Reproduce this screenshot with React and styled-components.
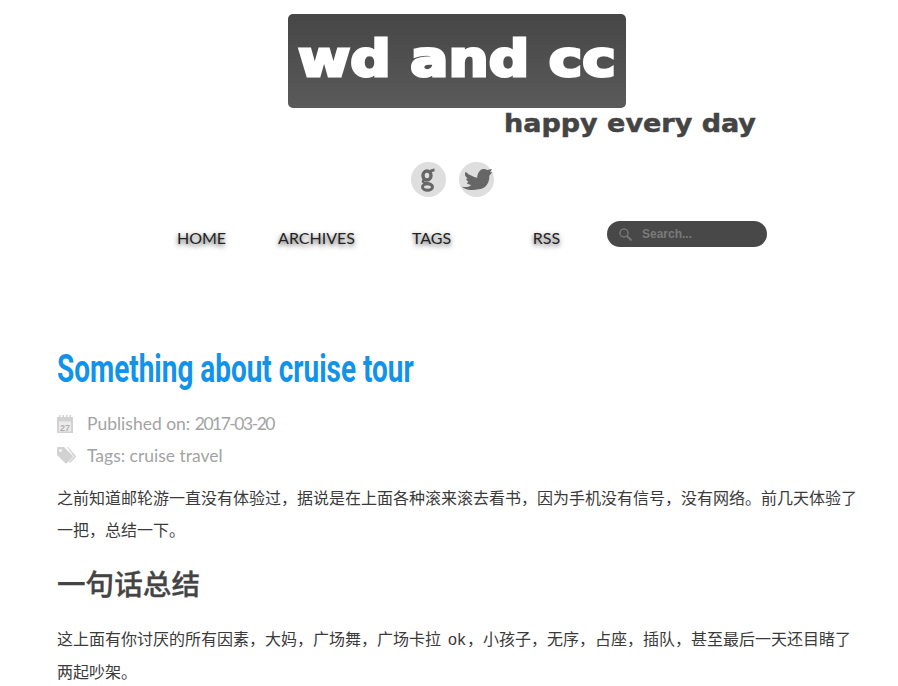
import React from 'react';
import styled, { createGlobalStyle } from 'styled-components';

const CJK = '"Noto Sans CJK SC", "Noto Sans CJK TC"';

const GlobalStyle = createGlobalStyle`
  html, body {
    margin: 0;
    padding: 0;
    background: #fff;
    overflow: hidden;
  }
  body {
    font-family: Lato, ${CJK}, sans-serif;
  }
`;

const Page = styled.div`
  width: 898px;
  height: 686px;
  overflow: hidden;
`;

const Header = styled.header`
  display: flex;
  flex-direction: column;
  padding-top: 14px;
`;

const LogoBox = styled.div`
  width: 338px;
  height: 94px;
  margin-left: 288px;
  display: flex;
  align-items: center;
  border-radius: 5px;
  background: linear-gradient(#464646, #5a5a5a);
  overflow: hidden;
`;

const LogoText = styled.span`
  display: block;
  margin: -4px 0 0 10px;
  font-family: "DejaVu Sans", sans-serif;
  font-weight: 700;
  font-size: 50px;
  line-height: 60px;
  color: #fff;
  white-space: nowrap;
  -webkit-text-stroke: 3px #fff;
  transform-origin: left center;
  transform: scaleX(1.13);
`;

const Tagline = styled.div`
  margin: 1px 0 0 504px;
  height: 29px;
  font-family: "DejaVu Sans", sans-serif;
  font-weight: 700;
  font-size: 25px;
  line-height: 29px;
  color: #444;
  white-space: nowrap;
  -webkit-text-stroke: 0.5px #444;
  transform-origin: left center;
  transform: scaleX(1.08);
`;

const Social = styled.div`
  display: flex;
  justify-content: center;
  gap: 13px;
  margin: 24px 0 0 6px;
`;

const SocialLink = styled.a`
  width: 35px;
  height: 35px;
  border-radius: 50%;
  background: #dedede;
  display: flex;
  align-items: center;
  justify-content: center;
`;

const NavRow = styled.nav`
  display: flex;
  align-items: flex-start;
  margin-top: 24px;
  padding-left: 144px;
`;

const NavItem = styled.a`
  width: 115px;
  padding-top: 7px;
  text-align: center;
  font-size: 16px;
  line-height: 19px;
  color: #222;
  text-shadow: 0 2px 5px rgba(0, 0, 0, 0.7);
`;

const SearchBox = styled.div`
  width: 160px;
  height: 26px;
  margin-left: 3px;
  box-sizing: border-box;
  padding-left: 11px;
  display: flex;
  align-items: center;
  gap: 9px;
  border-radius: 13px;
  background: #484848;
`;

const SearchText = styled.span`
  font-family: "Liberation Sans", sans-serif;
  font-weight: 700;
  font-size: 12px;
  color: #7b7b7b;
`;

const Article = styled.article`
  padding: 0 40px 0 57px;
`;

const Title = styled.h1`
  margin: 98px 0 0;
  height: 48px;
  font-family: Roboto, sans-serif;
  font-weight: 700;
  font-size: 38px;
  line-height: 48px;
  color: #1193ea;
  white-space: nowrap;
  transform-origin: left center;
  transform: scaleX(0.735);
`;

const MetaList = styled.div`
  display: flex;
  flex-direction: column;
  margin-top: 14px;
`;

const MetaRow = styled.div`
  display: flex;
  align-items: center;
  height: 32px;
  font-size: 17.5px;
  white-space: pre;
  color: #a3a3a3;
`;

const DateText = styled.span`
  letter-spacing: -1.5px;
`;

const MetaIcon = styled.svg`
  width: 30px;
  height: 19px;
  flex: none;
  fill: #d2d2d2;
`;

const Para = styled.p`
  margin: 11px 0 0;
  font-size: 16px;
  line-height: 32px;
  color: #3a3a3a;
`;

const Latin = styled.span`
  font-family: "Liberation Sans", sans-serif;
  letter-spacing: 0.5px;
  margin: 0 1px 0 3px;
`;

const SubHead = styled.h2`
  margin: 20px 0 21px;
  font-size: 28.6px;
  line-height: 36px;
  font-weight: 500;
  color: #444;
  -webkit-text-stroke: 0.3px #444;
`;

function GoodreadsIcon() {
  return (
    <svg width="20" height="26" viewBox="0 0 20 26" fill="none" stroke="#666">
      <ellipse cx="9" cy="8.5" rx="4" ry="4.5" strokeWidth="3.4" />
      <ellipse cx="9.5" cy="20" rx="5" ry="3.2" strokeWidth="3" />
      <path d="M6 12.5 C4 14.5 5 16 9 16.3 C11 16.5 13 17 14 19" strokeWidth="2.4" />
      <path d="M12 5 C13 3.5 14.5 3 16.5 3" strokeWidth="2.8" />
    </svg>
  );
}

function BirdIcon() {
  return (
    <svg width="35" height="35" viewBox="0 0 35 35" fill="#666">
      <path d="M6.700 9.700 C8.500 11.500 10.500 13 12.700 13.700 C14.500 14.800 16.500 15.500 18.300 15.700 C18 12.500 20.500 7 24.300 7 C25.800 7 27.300 7.500 28.300 8 L33 7 L31 10.300 L33.300 10.300 L30.300 13.700 C30.500 17.500 29.500 20.500 27.700 23 C25.500 26 22.500 27.300 19.300 27.300 C16 28.300 12.500 28.300 9.300 27.700 C7 27.200 4.500 26 2.700 24.700 C5 25.200 7.500 25.200 9.300 24.700 C10.500 24.300 11.500 23.700 12.300 23 C10.500 22.800 8.800 22.200 7.700 21.300 L9.300 19.700 C8.300 19 7.500 18 7 17 L8.700 16.300 C7.200 15.200 6 13.500 6 13 C5.800 11.800 6 10.700 6.700 9.700 Z" />
    </svg>
  );
}

function CalendarIcon() {
  return (
    <MetaIcon viewBox="0 0 30 19">
      <path d="M0 3h2V1h1.500v2h2V1H7v2h2V1h1.500v2h2V1H14v2h2v16H0z" />
      <rect x="2" y="7.500" width="12" height="10" fill="#ececec" />
      <text x="8" y="16.500" textAnchor="middle" fontFamily="Liberation Sans" fontWeight="700" fontSize="9" fill="#b0b0b0">27</text>
    </MetaIcon>
  );
}

function TagsIcon() {
  return (
    <MetaIcon viewBox="0 0 30 19">
      <path d="M0 2.500 0.500 1H7l8.500 8.500a1.500 1.500 0 0 1 0 2L10 17a1.500 1.500 0 0 1-2 0L0 9z" />
      <circle cx="3.500" cy="4.500" r="1.300" fill="#fff" />
      <path d="M10 1h1l7.500 8.500a1.500 1.500 0 0 1 0 2L13 17l-1-1 5-5.500z" />
    </MetaIcon>
  );
}

function SearchIcon() {
  return (
    <svg width="15" height="15" viewBox="0 0 15 15" fill="none" stroke="#767676">
      <circle cx="6" cy="6" r="4" strokeWidth="1.5" />
      <path d="M9 9l4.500 4.500" strokeWidth="2" />
    </svg>
  );
}

export default function App() {
  return (
    <Page>
      <GlobalStyle />
      <Header>
        <LogoBox>
          <LogoText>wd and cc</LogoText>
        </LogoBox>
        <Tagline>happy every day</Tagline>
        <Social>
          <SocialLink><GoodreadsIcon /></SocialLink>
          <SocialLink><BirdIcon /></SocialLink>
        </Social>
        <NavRow>
          <NavItem>HOME</NavItem>
          <NavItem>ARCHIVES</NavItem>
          <NavItem>TAGS</NavItem>
          <NavItem>RSS</NavItem>
          <SearchBox>
            <SearchIcon />
            <SearchText>Search...</SearchText>
          </SearchBox>
        </NavRow>
      </Header>
      <Article>
        <Title>Something about cruise tour</Title>
        <MetaList>
          <MetaRow><CalendarIcon />Published on: <DateText>2017-03-20</DateText></MetaRow>
          <MetaRow><TagsIcon />Tags: cruise travel</MetaRow>
        </MetaList>
        <Para>之前知道邮轮游一直没有体验过，据说是在上面各种滚来滚去看书，因为手机没有信号，没有网络。前几天体验了一把，总结一下。</Para>
        <SubHead>一句话总结</SubHead>
        <Para>这上面有你讨厌的所有因素，大妈，广场舞，广场卡拉 <Latin>ok</Latin>，小孩子，无序，占座，插队，甚至最后一天还目睹了两起吵架。</Para>
      </Article>
    </Page>
  );
}
